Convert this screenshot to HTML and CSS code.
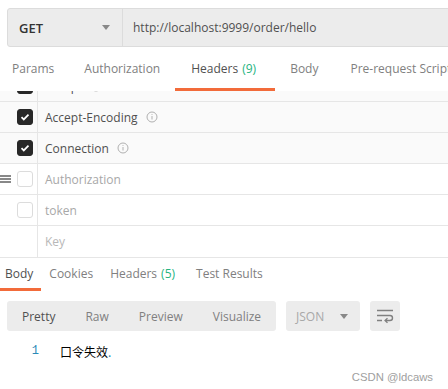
FILE: index.html
```html
<!DOCTYPE html>
<html>
<head>
<meta charset="utf-8">
<link rel="stylesheet" href="styles.css">
</head>
<body>
<div class="urlbar">
  <div class="method"><span>GET</span><span class="caret"></span></div>
  <div class="url">http://localhost:9999/order/hello</div>
</div>
<div class="tabs">
  <div class="tab">Params</div>
  <div class="tab">Authorization</div>
  <div class="tab active">Headers <span class="count">(9)</span></div>
  <div class="tab">Body</div>
  <div class="tab">Pre-request Script</div>
</div>
<div class="table">
  <div class="row checked clipped">
    <div class="lead"><span class="cb on"><svg viewBox="0 0 16 16"><path d="M4 8.2l2.6 2.6L12 5.4" fill="none" stroke="#fff" stroke-width="2"/></svg></span></div>
    <div class="key dark">Accept <svg class="info" viewBox="0 0 12 12"><circle cx="6" cy="6" r="5" fill="none" stroke="#b0b0b0"/><path d="M6 5v3.5M6 3.2v.8" stroke="#b0b0b0"/></svg></div>
  </div>
  <div class="row checked">
    <div class="lead"><span class="cb on"><svg viewBox="0 0 16 16"><path d="M4 8.2l2.6 2.6L12 5.4" fill="none" stroke="#fff" stroke-width="2"/></svg></span></div>
    <div class="key dark">Accept-Encoding <svg class="info" viewBox="0 0 12 12"><circle cx="6" cy="6" r="5" fill="none" stroke="#b0b0b0"/><path d="M6 5v3.5M6 3.2v.8" stroke="#b0b0b0"/></svg></div>
  </div>
  <div class="row checked">
    <div class="lead"><span class="cb on"><svg viewBox="0 0 16 16"><path d="M4 8.2l2.6 2.6L12 5.4" fill="none" stroke="#fff" stroke-width="2"/></svg></span></div>
    <div class="key dark">Connection <svg class="info" viewBox="0 0 12 12"><circle cx="6" cy="6" r="5" fill="none" stroke="#b0b0b0"/><path d="M6 5v3.5M6 3.2v.8" stroke="#b0b0b0"/></svg></div>
  </div>
  <div class="row">
    <div class="lead"><span class="handle"></span><span class="cb"></span></div>
    <div class="key">Authorization</div>
  </div>
  <div class="row">
    <div class="lead"><span class="cb"></span></div>
    <div class="key">token</div>
  </div>
  <div class="row">
    <div class="lead"></div>
    <div class="key placeholder">Key</div>
  </div>
</div>
<div class="rtabs">
  <div class="rtab active">Body</div>
  <div class="rtab">Cookies</div>
  <div class="rtab">Headers <span class="count">(5)</span></div>
  <div class="rtab">Test Results</div>
</div>
<div class="toolbar">
  <div class="seg">
    <div class="segbtn active">Pretty</div>
    <div class="segbtn">Raw</div>
    <div class="segbtn">Preview</div>
    <div class="segbtn">Visualize</div>
  </div>
  <div class="select"><span>JSON</span><span class="caret"></span></div>
  <div class="wrapbtn"><svg viewBox="0 0 18 16" width="18" height="16"><path d="M1 2.5h16M1 7.5h13a2.5 2.5 0 0 1 0 5h-4M1 12.5h5" fill="none" stroke="#808080" stroke-width="1.4"/><path d="M11.5 10.2l-2.4 2.3 2.4 2.3" fill="none" stroke="#808080" stroke-width="1.4"/></svg></div>
</div>
<div class="code">
  <span class="ln">1</span><span class="txt">口令失效<span class="dot">.</span></span>
</div>
<div class="watermark">CSDN @ldcaws</div>
</body>
</html>
```
FILE: styles.css
```css
* { box-sizing: border-box; }
html, body { margin: 0; padding: 0; }
body {
  width: 448px;
  height: 389px;
  overflow: hidden;
  background: #fff;
  font-family: "Open Sans", "Noto Sans CJK SC", sans-serif;
  font-size: 12px;
  color: #808080;
  position: relative;
}
.urlbar {
  margin: 8px 0 0 7px;
  width: 460px;
  height: 39px;
  display: flex;
  background: #ececec;
  border: 1px solid #dcdcdc;
  border-radius: 3px;
}
.method {
  width: 115px;
  display: flex;
  align-items: center;
  justify-content: space-between;
  padding: 0 12px 0 11px;
  border-right: 1px solid #dcdcdc;
  color: #333;
  font-size: 13px;
  font-weight: 600;
}
.caret {
  width: 0; height: 0;
  border-left: 4px solid transparent;
  border-right: 4px solid transparent;
  border-top: 5px solid #888;
}
.url {
  display: flex;
  align-items: center;
  padding-left: 10px;
  color: #505050;
  font-size: 12px;
}
.tabs {
  display: flex;
  height: 44px;
  margin-left: -3px;
  white-space: nowrap;
}
.tab {
  padding: 0 15px;
  display: flex;
  align-items: center;
  padding-top: 1px;
  font-size: 12px;
  color: #808080;
  border-bottom: 3px solid transparent;
}
.tab.active {
  color: #505050;
  border-bottom-color: #f26b3a;
  padding: 1px 19px 0 16px;
}
.tab:nth-child(4) { padding-right: 17px; }
.count { color: #26b47f; margin-left: 4px; }
.table {
  height: 167px;
  overflow: hidden;
  border-bottom: 1px solid #e6e6e6;
}
.row {
  display: flex;
  height: 31px;
  border-bottom: 1px solid #e6e6e6;
  background: #fff;
}
.row:last-child { border-bottom: none; }
.row.checked { background: #fafafa; }
.row.clipped { margin-top: -20px; }
.lead {
  width: 38px;
  flex: none;
  border-right: 1px solid #e6e6e6;
  display: flex;
  align-items: center;
  justify-content: flex-end;
  padding-right: 4px;
  position: relative;
}
.cb {
  width: 16px; height: 16px;
  border: 1px solid #dcdcdc;
  border-radius: 3px;
  background: #fff;
  display: block;
}
.cb.on {
  background: #282828;
  border-color: #282828;
}
.cb svg { width: 14px; height: 14px; display: block; }
.handle {
  position: absolute;
  left: 0; top: 11px;
  width: 11px; height: 8px;
  border-top: 2px solid #888;
  border-bottom: 2px solid #888;
}
.handle::after {
  content: "";
  position: absolute;
  left: 0; right: 0; top: 1px;
  border-top: 2px solid #888;
}
.key {
  display: flex;
  align-items: center;
  padding-left: 7px;
  color: #a8a8a8;
  font-size: 12px;
}
.key.dark { color: #505050; }
.key.placeholder { color: #b8b8b8; }
.info { width: 12px; height: 12px; margin-left: 8px; }
.rtabs {
  display: flex;
  height: 33px;
  white-space: nowrap;
}
.rtab {
  display: flex;
  align-items: center;
  padding: 0 9px 0 8px;
  color: #808080;
  border-bottom: 3px solid transparent;
  font-size: 12px;
}
.rtab.active {
  color: #505050;
  border-bottom-color: #f26b3a;
  padding: 0 8px 0 5px;
}
.rtab:nth-child(3) { padding-right: 13px; }
.toolbar {
  display: flex;
  margin: 10px 0 0 7px;
  height: 30px;
}
.seg {
  display: flex;
  background: #ececec;
  border-radius: 3px;
  width: 269px;
}
.segbtn {
  display: flex;
  align-items: center;
  padding: 0 15px;
  color: #808080;
}
.segbtn.active { color: #505050; }
.select {
  margin-left: 10px;
  width: 74px;
  background: #ececec;
  border-radius: 3px;
  display: flex;
  align-items: center;
  justify-content: space-between;
  padding: 0 12px 0 10px;
  color: #a8a8a8;
}
.wrapbtn {
  margin-left: 10px;
  width: 30px;
  background: #ececec;
  border-radius: 3px;
  display: flex;
  align-items: center;
  justify-content: center;
}
.code {
  display: flex;
  align-items: center;
  height: 20px;
  margin-top: 10px;
}
.ln {
  width: 40px;
  text-align: right;
  padding-right: 1px;
  color: #2a8ab8;
  font-family: "Liberation Mono", monospace;
  font-size: 12px;
}
.txt {
  margin-left: 20px;
  color: #000;
  font-family: "Noto Sans CJK SC", sans-serif;
  font-size: 12px;
}
.dot { color: #1a8ab0; }
.watermark {
  position: absolute;
  right: 15px;
  bottom: 6px;
  font-family: "Liberation Sans", Arial, sans-serif;
  font-size: 11.3px;
  color: #a0a0a0;
}
```
